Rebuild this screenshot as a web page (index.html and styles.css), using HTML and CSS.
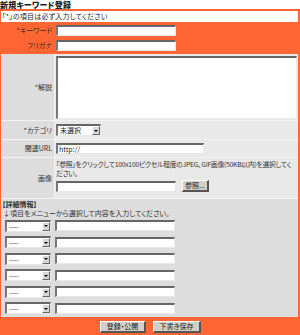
FILE: index.html
```html
<!DOCTYPE html>
<html lang="ja">
<head>
<meta charset="utf-8">
<link rel="stylesheet" href="styles.css">
</head>
<body>
<div class="page">
  <h1 class="title">新規キーワード登録</h1>
  <div class="form">
    <p class="notice">「*」の項目は必ず入力してください</p>
    <div class="req-block">
      <div class="row req">
        <div class="lbl">*キーワード</div>
        <div class="val"><div class="txt w120"></div></div>
      </div>
      <div class="row req">
        <div class="lbl">フリガナ</div>
        <div class="val"><div class="txt w120"></div></div>
      </div>
    </div>
    <div class="row desc">
      <div class="lbl">*解説</div>
      <div class="val"><div class="txt area"></div></div>
    </div>
    <div class="row cat">
      <div class="lbl">*カテゴリ</div>
      <div class="val">
        <div class="sel w45"><span class="sel-text">未選択</span><span class="arrow"></span></div>
      </div>
    </div>
    <div class="row url">
      <div class="lbl">関連URL</div>
      <div class="val"><div class="txt w148">http://</div></div>
    </div>
    <div class="row img">
      <div class="lbl">画像</div>
      <div class="val">
        <p class="help">「参照」をクリックして100x100ピクセル程度のJPEG、GIF画像(50KB以内)を選択してください。</p>
        <div class="file-line">
          <div class="txt w120"></div>
          <div class="btn">参照...</div>
        </div>
      </div>
    </div>
    <div class="details">
      <p class="det-title">【詳細情報】</p>
      <p class="det-help">↓項目をメニューから選択して内容を入力してください。</p>
      <div class="det-rows">
        <div class="det-row"><div class="sel w46"><span class="sel-text">----</span><span class="arrow"></span></div><div class="txt w120"></div></div>
        <div class="det-row"><div class="sel w46"><span class="sel-text">----</span><span class="arrow"></span></div><div class="txt w120"></div></div>
        <div class="det-row"><div class="sel w46"><span class="sel-text">----</span><span class="arrow"></span></div><div class="txt w120"></div></div>
        <div class="det-row"><div class="sel w46"><span class="sel-text">----</span><span class="arrow"></span></div><div class="txt w120"></div></div>
        <div class="det-row"><div class="sel w46"><span class="sel-text">----</span><span class="arrow"></span></div><div class="txt w120"></div></div>
        <div class="det-row"><div class="sel w46"><span class="sel-text">----</span><span class="arrow"></span></div><div class="txt w120"></div></div>
      </div>
    </div>
    <div class="actions">
      <div class="btn b-pub">登録・公開</div>
      <div class="btn b-draft">下書き保存</div>
    </div>
  </div>
</div>
</body>
</html>
```

FILE: styles.css
```css
* { box-sizing: border-box; }
html, body { margin: 0; padding: 0; background: #fff; }
body {
  font-family: "Noto Sans CJK JP", "Noto Sans", sans-serif;
  font-size: 7px;
  line-height: 1.2;
  color: #333;
  font-feature-settings: "palt";
}
p { margin: 0; }
.page { width: 300px; }
.title {
  margin: 0;
  height: 11px;
  font-size: 8px;
  font-weight: 900;
  line-height: 9px;
  letter-spacing: 0.2px;
  color: #222;
  border-bottom: 2px solid #ff6633;
}
.form {
  border-left: 1px solid #ff6633;
  border-right: 2px solid #ff6633;
  background: #f2f2f2;
}
.notice {
  height: 11px;
  background: #fff;
  padding-left: 1px;
  line-height: 11px;
  color: #222;
  letter-spacing: 0.2px;
}
.req-block { background: #ff6633; padding: 1px 0; }
.row { display: flex; }
.lbl {
  width: 54px;
  flex: none;
  display: flex;
  align-items: center;
  justify-content: flex-end;
  padding-right: 2px;
  background: #dddddd;
  border-right: 1px solid #f2f2f2;
}
.val {
  flex: 1;
  display: flex;
  flex-direction: column;
  justify-content: center;
  padding-left: 1px;
  background: #e9e9e9;
}
.row.req { height: 15px; }
.row.req .lbl { background: #ff6633; border-right-color: #ff6633; color: #3a2a20; }
.row.req .val { background: #ff6633; }
.row.desc { height: 66px; }
.row.desc .val { padding-right: 1px; }
.row.cat { height: 18px; margin-top: 1px; }
.row.url { height: 17px; margin-top: 1px; }
.row.img { height: 40px; margin-top: 1px; }
.row.img .val { justify-content: flex-start; padding-top: 2px; padding-right: 2px; }
.txt {
  height: 11px;
  background: #fff;
  border-style: solid;
  border-width: 2px 1px 1px 2px;
  border-color: #666 #e8e8e8 #e8e8e8 #777;
  font-size: 7px;
  line-height: 8px;
  padding-left: 1px;
  color: #222;
}
.w120 { width: 120px; }
.w148 { width: 148px; }
.area { height: 63px; width: 100%; }
.sel {
  display: flex;
  height: 12px;
  background: #fff;
  border-style: solid;
  border-width: 2px 1px 1px 2px;
  border-color: #666 #e8e8e8 #e8e8e8 #777;
}
.w45 { width: 45px; }
.w46 { width: 46px; }
.sel-text { flex: 1; line-height: 9px; padding-left: 2px; color: #222; }
.arrow {
  width: 8px;
  flex: none;
  background: #d6d6d6;
  border-style: solid;
  border-width: 1px;
  border-color: #fff #666 #666 #fff;
  display: flex;
  align-items: center;
  justify-content: center;
}
.arrow::after {
  content: "";
  border-left: 2px solid transparent;
  border-right: 2px solid transparent;
  border-top: 2px solid #000;
}
.help {
  line-height: 9px;
  color: #333;
  font-size: 6.8px;
  letter-spacing: -0.26px;
}
.file-line { display: flex; align-items: center; gap: 6px; margin-top: 2px; }
.btn {
  height: 12px;
  background: #d4d0c8;
  border-style: solid;
  border-width: 1px 2px 2px 1px;
  border-color: #fff #555 #555 #fff;
  display: flex;
  align-items: center;
  justify-content: center;
  color: #222;
  font-size: 7px;
}
.file-line .btn { width: 27px; }
.details {
  margin-top: 1px;
  background: #dddddd;
  padding: 1px 0 2px 0;
  height: 118px;
}
.det-title { font-weight: bold; line-height: 8px; padding-left: 1px; }
.det-help { line-height: 9px; padding-left: 2px; margin-top: 1px; }
.det-rows { display: flex; flex-direction: column; gap: 5.6px; padding-left: 4px; margin-top: 2px; }
.det-row { display: flex; gap: 4px; align-items: center; height: 11px; }
.actions {
  background: #ff6633;
  height: 19px;
  display: flex;
  align-items: center;
  padding-left: 99px;
  gap: 7px;
}
.b-pub { width: 46px; }
.b-draft { width: 48px; }
```
